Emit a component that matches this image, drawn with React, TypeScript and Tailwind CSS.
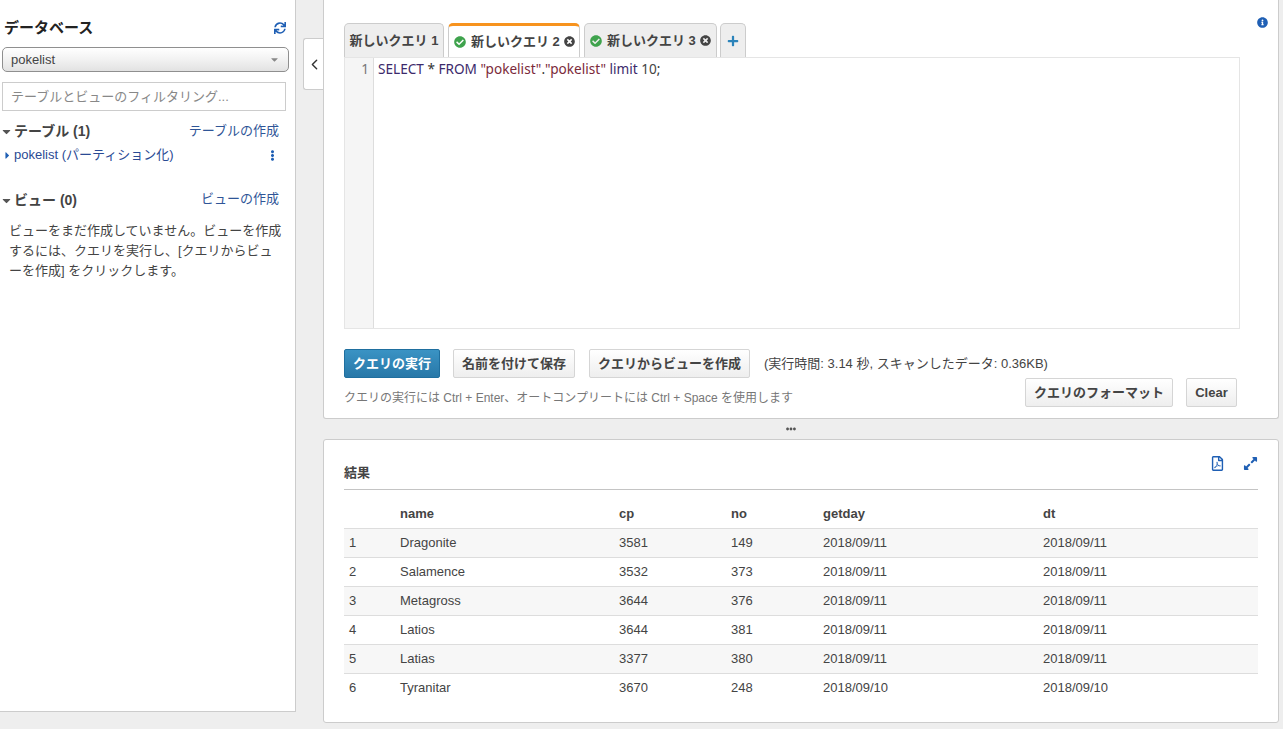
import React from "react";
import {
  FaCaretDown,
  FaCaretRight,
  FaCheckCircle,
  FaEllipsisH,
  FaEllipsisV,
  FaExpandAlt,
  FaInfoCircle,
  FaPlus,
  FaRegFilePdf,
  FaSync,
  FaTimesCircle,
} from "react-icons/fa";
import { ChevronLeft } from "lucide-react";

const rows = [
  ["1", "Dragonite", "3581", "149", "2018/09/11", "2018/09/11"],
  ["2", "Salamence", "3532", "373", "2018/09/11", "2018/09/11"],
  ["3", "Metagross", "3644", "376", "2018/09/11", "2018/09/11"],
  ["4", "Latios", "3644", "381", "2018/09/11", "2018/09/11"],
  ["5", "Latias", "3377", "380", "2018/09/11", "2018/09/11"],
  ["6", "Tyranitar", "3670", "248", "2018/09/10", "2018/09/10"],
];

const tableCols = "grid grid-cols-[56px_219px_112px_92px_220px_1fr]";
const grayButton =
  "h-[29px] rounded-[2px] border border-[#d5d5d5] bg-gradient-to-b from-[#ffffff] to-[#eeeeee] text-[13px] font-bold text-[#444444]";

const Sidebar = () => (
  <aside className="h-[712px] w-[296px] shrink-0 border-r border-b border-[#cccccc] bg-white">
    <div className="flex items-center justify-between pt-[18px] pr-[9px] pl-[4px]">
      <h2 className="text-[15px] leading-[20px] font-bold text-[#222222]">データベース</h2>
      <FaSync className="text-[12px] text-[#1f5fb4]" />
    </div>
    <div className="mt-[9px] ml-[2px] flex h-[25px] w-[287px] items-center justify-between rounded-[5px] border border-[#8f8f8f] bg-gradient-to-b from-[#ffffff] via-[#f2f2f2] to-[#e2e2e2] pr-[8px] pl-[8px] text-[13px] text-[#444444]">
      <span>pokelist</span>
      <FaCaretDown className="text-[11px] text-[#888888]" />
    </div>
    <div className="mt-[10px] ml-[2px] flex h-[29px] w-[284px] items-center border border-[#cccccc] pl-[8px] text-[13px] text-[#888888]">
      テーブルとビューのフィルタリング...
    </div>
    <div className="mt-[10px] flex items-center justify-between pr-[16px]">
      <div className="flex items-center gap-[1px] text-[14px] leading-[20px] font-bold text-[#444444]">
        <FaCaretDown className="text-[13px] text-[#555555]" />
        <span>テーブル (1)</span>
      </div>
      <a className="text-[13px] leading-[20px] text-[#2f5597]">テーブルの作成</a>
    </div>
    <div className="mt-[4px] flex items-center justify-between pr-[17px] pl-[2px] text-[13px] leading-[20px] text-[#2a4a94]">
      <div className="flex items-center gap-[1px]">
        <FaCaretRight className="text-[11px] text-[#1f5fb4]" />
        <span>pokelist (パーティション化)</span>
      </div>
      <FaEllipsisV className="text-[11px] text-[#1f5fb4]" />
    </div>
    <div className="mt-[25px] flex items-center justify-between pr-[16px]">
      <div className="flex items-center gap-[1px] text-[14px] leading-[20px] font-bold text-[#444444]">
        <FaCaretDown className="text-[13px] text-[#555555]" />
        <span>ビュー (0)</span>
      </div>
      <a className="-mt-[2px] text-[13px] leading-[20px] text-[#2f5597]">ビューの作成</a>
    </div>
    <p className="mt-[11px] w-[283px] pl-[9px] text-[13px] leading-[20px] [line-break:anywhere] text-[#444444]">
      ビューをまだ作成していません。ビューを作成するには、クエリを実行し、[クエリからビューを作成] をクリックします。
    </p>
  </aside>
);

const Tabs = () => (
  <div className="flex items-end pl-[20px]">
    <div className="flex h-[34px] w-[100px] items-center justify-center rounded-t-[5px] border border-b-0 border-[#cccccc] bg-[#eeeeee] text-[13px] font-bold text-[#444444]">
      新しいクエリ 1
    </div>
    <div className="ml-[4px] flex h-[34px] w-[132px] items-center rounded-t-[5px] border-t-[3px] border-r border-l border-r-[#cccccc] border-l-[#cccccc] border-t-[#f7931e] bg-white pl-[5px] text-[13px] font-bold text-[#444444]">
      <FaCheckCircle className="text-[12px] text-[#3fa34d]" />
      <span className="ml-[5px]">新しいクエリ 2</span>
      <FaTimesCircle className="ml-[4px] text-[11px] text-[#444444]" />
    </div>
    <div className="ml-[4px] flex h-[34px] w-[133px] items-center rounded-t-[5px] border border-b-0 border-[#cccccc] bg-[#eeeeee] pl-[5px] text-[13px] font-bold text-[#444444]">
      <FaCheckCircle className="text-[12px] text-[#3fa34d]" />
      <span className="ml-[5px]">新しいクエリ 3</span>
      <FaTimesCircle className="ml-[4px] text-[11px] text-[#444444]" />
    </div>
    <div className="ml-[3px] flex h-[34px] w-[26px] items-center justify-center rounded-t-[5px] border border-b-0 border-[#cccccc] bg-[#eeeeee]">
      <FaPlus className="text-[12px] text-[#2b83ba]" />
    </div>
  </div>
);

const Editor = () => (
  <div className="ml-[20px] flex h-[272px] w-[896px] border border-[#e5e5e5]">
    <div className="w-[29px] shrink-0 border-r border-[#dddddd] bg-[#f5f5f5] pt-[2px] pr-[4px] text-right font-['Noto_Sans',sans-serif] text-[13.6px] leading-[17px] text-[#777777]">
      1
    </div>
    <pre className="pt-[2px] pl-[4px] font-['Noto_Sans',sans-serif] text-[13.6px] leading-[17px] text-[#333333]">
      <span className="text-[#3c2a6b]">SELECT</span> <b className="font-normal">*</b>{" "}
      <span className="text-[#3c2a6b]">FROM</span>{" "}
      <span className="text-[#7b2a3a]">"pokelist"</span>.<span className="text-[#7b2a3a]">"pokelist"</span>{" "}
      <span className="text-[#3c2a6b]">limit</span> <span className="text-[#444444]">10</span>;
    </pre>
  </div>
);

const QueryPanel = () => (
  <section className="relative h-[419px] w-[956px] rounded-b-[3px] border-r border-b border-l border-[#cccccc] bg-white pt-[23px]">
    <FaInfoCircle className="absolute top-[17px] right-[10px] text-[11px] text-[#1f5fb4]" />
    <Tabs />
    <Editor />
    <div className="mt-[20px] flex items-center pl-[20px]">
      <button className="h-[29px] w-[96px] rounded-[2px] border border-[#1f6f9f] bg-gradient-to-b from-[#3a93c4] to-[#2878a8] text-[13px] font-bold text-white">
        クエリの実行
      </button>
      <button className={`${grayButton} ml-[13px] w-[122px]`}>名前を付けて保存</button>
      <button className={`${grayButton} ml-[14px] w-[161px]`}>クエリからビューを作成</button>
      <span className="ml-[14px] text-[13px] text-[#444444]">(実行時間: 3.14 秒, スキャンしたデータ: 0.36KB)</span>
    </div>
    <div className="flex items-end justify-between pr-[41px] pl-[20px]">
      <span className="text-[12px] leading-[18px] text-[#777777]">
        クエリの実行には Ctrl + Enter、オートコンプリートには Ctrl + Space を使用します
      </span>
      <div className="flex gap-[13px]">
        <button className={`${grayButton} w-[148px]`}>クエリのフォーマット</button>
        <button className={`${grayButton} w-[51px]`}>Clear</button>
      </div>
    </div>
  </section>
);

const ResultPanel = () => (
  <section className="h-[284px] w-[956px] rounded-[3px] border border-[#cccccc] bg-white px-[20px]">
    <div className="flex h-[50px] items-end justify-between border-b border-[#c4c4c4] pb-[6px]">
      <h3 className="text-[13px] leading-[20px] font-bold text-[#444444]">結果</h3>
      <div className="mb-[12px] flex items-center gap-[18px]">
        <FaRegFilePdf className="text-[15px] text-[#1f5fb4]" />
        <FaExpandAlt className="text-[15px] text-[#1f5fb4]" />
      </div>
    </div>
    <div className={`${tableCols} h-[39px] items-center border-b border-[#dddddd] pt-[10px] text-[13px] font-bold text-[#444444]`}>
      <span />
      <span>name</span>
      <span>cp</span>
      <span>no</span>
      <span>getday</span>
      <span>dt</span>
    </div>
    {rows.map((row, i) => (
      <div
        key={row[0]}
        className={`${tableCols} h-[29px] items-center border-b text-[13px] text-[#444444] ${
          i % 2 === 0 ? "bg-[#f7f7f7]" : "bg-white"
        } ${i < rows.length - 1 ? "border-[#dddddd]" : "border-transparent"}`}
      >
        <span className="pl-[5px]">{row[0]}</span>
        <span>{row[1]}</span>
        <span>{row[2]}</span>
        <span>{row[3]}</span>
        <span>{row[4]}</span>
        <span>{row[5]}</span>
      </div>
    ))}
  </section>
);

export default function App() {
  return (
    <div className="flex h-[729px] w-[1283px] overflow-hidden bg-[#eeeeee] font-['Liberation_Sans','Noto_Sans_CJK_JP',sans-serif]">
      <Sidebar />
      <div className="w-[27px] shrink-0 pt-[38px] pl-[7px]">
        <div className="flex h-[52px] w-[20px] items-center justify-center rounded-l-[3px] border-t border-b border-l border-[#cccccc] bg-white pl-[2px]">
          <ChevronLeft size={17} strokeWidth={2} className="text-[#333333]" />
        </div>
      </div>
      <main className="flex flex-col">
        <QueryPanel />
        <div className="flex h-[20px] items-center justify-center pr-[20px]">
          <FaEllipsisH className="text-[10px] text-[#555555]" />
        </div>
        <ResultPanel />
      </main>
    </div>
  );
}
